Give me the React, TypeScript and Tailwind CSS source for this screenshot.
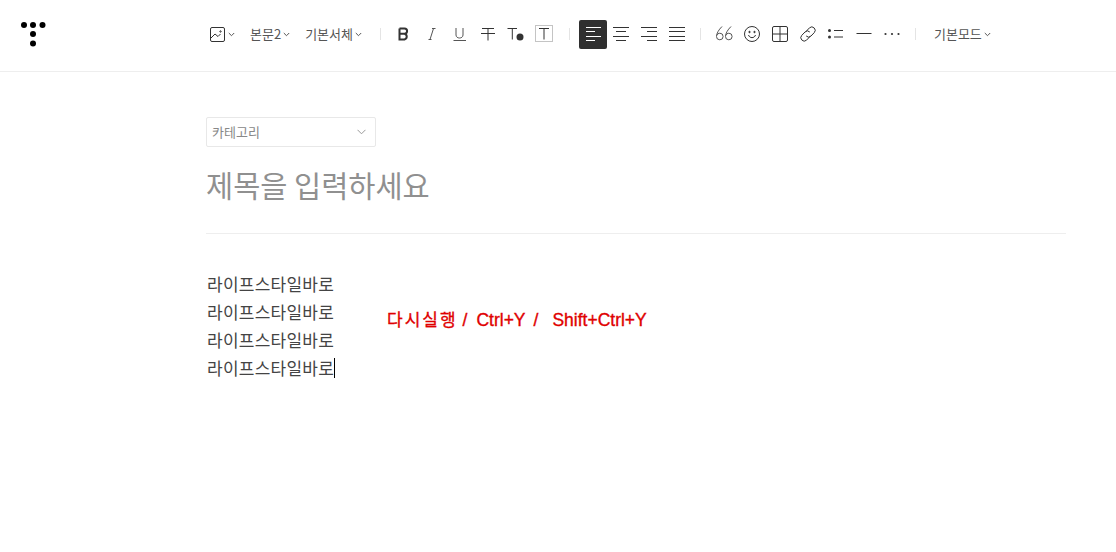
import React from "react";

const Chevron = ({ className = "" }: { className?: string }) => (
  <svg width="7" height="5" viewBox="0 0 7 5" fill="none" stroke="#555" strokeWidth="1" className={className}>
    <path d="M0.8 1 L3.5 3.7 L6.2 1" />
  </svg>
);

const Sep = ({ className = "" }: { className?: string }) => <div className={`w-px h-3 bg-[#e4e4e4] ${className}`} />;

const Ico = ({ children, active = false }: { children: React.ReactNode; active?: boolean }) => (
  <div className={`w-7 h-[29px] flex items-center justify-center rounded-[2px] ${active ? "bg-[#2f2f2f]" : ""}`}>
    <svg width="20" height="20" viewBox="0 0 20 20" fill="none" stroke={active ? "#fff" : "#333"} strokeWidth="1">
      {children}
    </svg>
  </div>
);

const Align = ({ rows, active }: { rows: [number, number][]; active?: boolean }) => (
  <Ico active={active}>
    {rows.map(([a, b], i) => (
      <path key={i} d={`M${a} ${[3.5, 7.5, 12.5, 16.5][i]} H${b}`} />
    ))}
  </Ico>
);

const Label = ({ children, className = "" }: { children: React.ReactNode; className?: string }) => (
  <span className={`text-[13px] leading-[20px] text-[#555] whitespace-nowrap ${className}`}>{children}</span>
);

export default function App() {
  return (
    <div className="relative w-[1116px] h-[552px] overflow-hidden bg-white font-['Noto_Sans_CJK_KR','Noto_Sans',sans-serif]">
      <header className="h-[72px] border-b border-[#eeeeee] flex items-center pl-[21px] pb-[3px]">
        <svg width="25" height="26" viewBox="0 0 25 26" fill="#000" className="mt-[2px]">
          <circle cx="3" cy="3" r="3" />
          <circle cx="12" cy="3" r="3" />
          <circle cx="21.5" cy="3" r="3" />
          <circle cx="12" cy="12" r="3" />
          <circle cx="12" cy="21.5" r="3" />
        </svg>
        <svg width="15" height="15" viewBox="0 0 15 15" fill="none" stroke="#333" strokeWidth="1" className="ml-[164px]">
          <rect x="0.5" y="0.5" width="14" height="14" rx="1.5" />
          <path d="M1 11 L5 7 L8 9.5 L10.5 7" />
          <circle cx="10.5" cy="4.5" r="0.7" />
        </svg>
        <Chevron className="ml-[3px]" />
        <Label className="ml-[15px]">본문2</Label>
        <Chevron className="ml-[2px]" />
        <Label className="ml-[15px]">기본서체</Label>
        <Chevron className="ml-[2px]" />
        <Sep className="ml-[18px]" />
        <div className="ml-[9px] flex items-center">
          <Ico>
            <path d="M5.5 4.5 H10.5 A2.6 2.6 0 0 1 10.5 9.7 H5.5 M10.5 9.7 A3 3 0 0 1 10.5 15.5 H5.5 V4.5" strokeWidth="2" />
          </Ico>
          <Ico>
            <path d="M8 15.5 L11.5 4.5 M6.5 15.5 H9.5 M10 4.5 H13.5" stroke="#555" />
          </Ico>
          <Ico>
            <path d="M6 4 V11 C6 15 13 15 13 11 V4 M3.5 16.5 H16" stroke="#555" />
          </Ico>
          <Ico>
            <path d="M4 4.5 H16 M10 4.5 V16.5 M3 9.5 H17" />
          </Ico>
          <Ico>
            <path d="M1.5 4.5 H11 M6.3 4.5 V15.5" />
            <circle cx="14" cy="13" r="3.5" fill="#333" stroke="none" />
          </Ico>
          <Ico>
            <rect x="1.5" y="1.5" width="17" height="16" stroke="#c4c4c4" />
            <path d="M5 4.5 H15 M10 4.5 V15.5" />
          </Ico>
        </div>
        <Sep className="ml-[11px]" />
        <div className="ml-[9px] flex items-center">
          <Align active rows={[[3, 18], [3, 12], [3, 18], [3, 12]]} />
          <Align rows={[[2, 18], [5, 15], [2, 18], [5, 15]]} />
          <Align rows={[[2, 18], [8, 18], [2, 18], [8, 18]]} />
          <Align rows={[[2, 18], [2, 18], [2, 18], [2, 18]]} />
        </div>
        <Sep className="ml-[9px]" />
        <div className="ml-[9px] flex items-center">
          <Ico>
            <path d="M8 2.5 C4.5 6 2.5 9.5 2.5 12.5 A3.3 3.3 0 1 0 5.8 9.2 A3.3 3.3 0 0 0 2.7 11.5 M17 2.5 C13.5 6 11.5 9.5 11.5 12.5 A3.3 3.3 0 1 0 14.8 9.2 A3.3 3.3 0 0 0 11.7 11.5" stroke="#555" />
          </Ico>
          <Ico>
            <circle cx="10" cy="10" r="7.5" />
            <path d="M6.5 11 C7.5 14.5 12.5 14.5 13.5 11" />
            <circle cx="7.5" cy="8" r="0.7" fill="#333" />
            <circle cx="12.5" cy="8" r="0.7" fill="#333" />
          </Ico>
          <Ico>
            <rect x="2.5" y="2.5" width="15" height="15" rx="1.5" />
            <path d="M10 2.5 V17.5 M2.5 10 H17.5" />
          </Ico>
          <Ico>
            <path d="M8 7.5 L11.5 3.8 A3.4 3.4 0 0 1 16.3 8.6 L13 12 A3.4 3.4 0 0 1 8.2 12 M12 12.5 L8.5 16.2 A3.4 3.4 0 0 1 3.7 11.4 L7 8 A3.4 3.4 0 0 1 11.8 8" />
          </Ico>
          <Ico>
            <circle cx="3.5" cy="6.5" r="1.5" fill="#333" stroke="none" />
            <circle cx="3.5" cy="13" r="1.5" fill="#333" stroke="none" />
            <path d="M8 6.5 H17 M8 13 H17" />
          </Ico>
          <Ico>
            <path d="M2.5 9.5 H17.5" />
          </Ico>
          <Ico>
            <circle cx="3.5" cy="10" r="1.1" fill="#333" stroke="none" />
            <circle cx="10" cy="10" r="1.1" fill="#333" stroke="none" />
            <circle cx="16.5" cy="10" r="1.1" fill="#333" stroke="none" />
          </Ico>
        </div>
        <Sep className="ml-[9px]" />
        <Label className="ml-[18px]">기본모드</Label>
        <Chevron className="ml-[2px]" />
      </header>

      <main className="ml-[206px] w-[860px] pt-[45px]">
        <div className="w-[170px] h-[30px] border border-[#e8e8e8] rounded-[2px] flex items-center justify-between pl-[5px] pr-[9px]">
          <span className="text-[13px] text-[#888]">카테고리</span>
          <svg width="9" height="6" viewBox="0 0 9 6" fill="none" stroke="#999" strokeWidth="1">
            <path d="M0.5 0.8 L4.5 4.8 L8.5 0.8" />
          </svg>
        </div>
        <h1 className="mt-[17px] text-[29.5px] leading-[40px] font-normal text-[#909090]">제목을 입력하세요</h1>
        <div className="mt-[29px] h-px bg-[#eeeeee]" />
        <div className="mt-[36px] pl-px text-[17px] tracking-[0.25px] leading-[28px] text-[#444] whitespace-nowrap">
          <p>라이프스타일바로</p>
          <p>라이프스타일바로</p>
          <p>라이프스타일바로</p>
          <p className="flex items-center">
            라이프스타일바로
            <span className="inline-block w-px h-[20px] bg-black" />
          </p>
        </div>
      </main>

      <div className="absolute left-[387px] top-[309px] text-[17.5px] leading-[22px] text-[#e00000] [-webkit-text-stroke:0.35px_#e00000] whitespace-pre font-['Liberation_Sans','Noto_Sans_CJK_KR',sans-serif]">
        <span className="text-[17px] tracking-[2px]">다시실행</span>
        <span className="ml-[5px]">/</span>
        <span className="ml-[9px]">Ctrl+Y</span>
        <span className="ml-[8px]">/</span>
        <span className="ml-[14px]">Shift+Ctrl+Y</span>
      </div>
    </div>
  );
}
